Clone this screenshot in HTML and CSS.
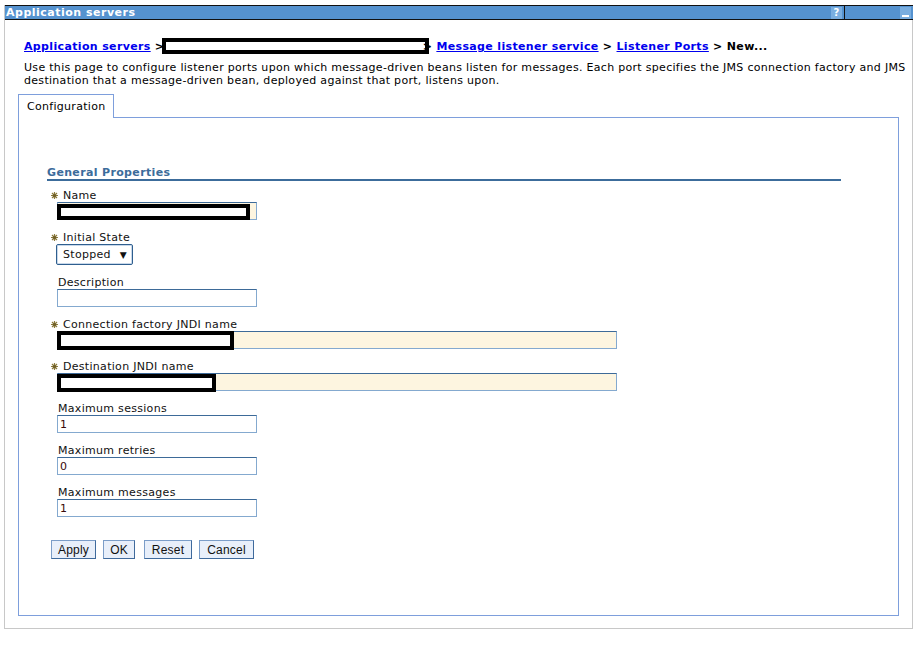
FILE: index.html
```html
<!DOCTYPE html>
<html>
<head>
<meta charset="utf-8">
<title>Application servers</title>
<link rel="stylesheet" href="styles.css">
</head>
<body>
<div class="portlet">
  <div class="titlebar">
    <span class="title">Application servers</span>
    <span class="tb-spacer"></span>
    <span class="tb-icon help">?</span>
    <span class="tb-sep"></span>
    <span class="tb-fill"></span>
    <span class="tb-icon min"><span class="dash"></span></span>
  </div>
  <div class="content">
    <div class="crumbs">
      <a href="#">Application servers</a> &gt; <span class="redact crumb-redact"></span>&gt; <a href="#">Message listener service</a> &gt; <a href="#">Listener Ports</a> &gt; New...
    </div>
    <p class="intro">Use this page to configure listener ports upon which message-driven beans listen for messages. Each port specifies the JMS connection factory and JMS destination that a message-driven bean, deployed against that port, listens upon.</p>
    <div class="tabs">
      <div class="tab">Configuration</div>
    </div>
    <div class="panel">
      <h3 class="section">General Properties</h3>
      <div class="fields">
        <div class="field">
          <label class="req"><span class="star"><svg width="7" height="7" viewBox="0 0 7 7"><path d="M3.5 0v7M0 3.5h7M1 1l5 5M6 1L1 6" stroke="#8b7a3c" stroke-width="1.2"/><circle cx="3.5" cy="3.5" r="1.6" fill="#6f5f28"/></svg></span>Name</label>
          <div class="inwrap">
            <input class="txt short required" type="text" value="">
            <span class="redact name-redact"></span>
          </div>
        </div>
        <div class="field">
          <label class="req"><span class="star"><svg width="7" height="7" viewBox="0 0 7 7"><path d="M3.5 0v7M0 3.5h7M1 1l5 5M6 1L1 6" stroke="#8b7a3c" stroke-width="1.2"/><circle cx="3.5" cy="3.5" r="1.6" fill="#6f5f28"/></svg></span>Initial State</label>
          <div class="selectbox"><span>Stopped</span><span class="arrow">▼</span></div>
        </div>
        <div class="field">
          <label>Description</label>
          <input class="txt short" type="text" value="">
        </div>
        <div class="field">
          <label class="req"><span class="star"><svg width="7" height="7" viewBox="0 0 7 7"><path d="M3.5 0v7M0 3.5h7M1 1l5 5M6 1L1 6" stroke="#8b7a3c" stroke-width="1.2"/><circle cx="3.5" cy="3.5" r="1.6" fill="#6f5f28"/></svg></span>Connection factory JNDI name</label>
          <div class="inwrap">
            <input class="txt long required" type="text" value="">
            <span class="redact cf-redact"></span>
          </div>
        </div>
        <div class="field">
          <label class="req"><span class="star"><svg width="7" height="7" viewBox="0 0 7 7"><path d="M3.5 0v7M0 3.5h7M1 1l5 5M6 1L1 6" stroke="#8b7a3c" stroke-width="1.2"/><circle cx="3.5" cy="3.5" r="1.6" fill="#6f5f28"/></svg></span>Destination JNDI name</label>
          <div class="inwrap">
            <input class="txt long required" type="text" value="">
            <span class="redact dest-redact"></span>
          </div>
        </div>
        <div class="field">
          <label>Maximum sessions</label>
          <input class="txt short" type="text" value="1">
        </div>
        <div class="field">
          <label>Maximum retries</label>
          <input class="txt short" type="text" value="0">
        </div>
        <div class="field">
          <label>Maximum messages</label>
          <input class="txt short" type="text" value="1">
        </div>
      </div>
      <div class="buttons">
        <button class="btn btn-apply">Apply</button>
        <button class="btn btn-ok">OK</button>
        <button class="btn btn-reset">Reset</button>
        <button class="btn btn-cancel">Cancel</button>
      </div>
    </div>
  </div>
</div>
</body>
</html>
```

FILE: styles.css
```css
* { box-sizing: border-box; }
html, body { margin: 0; padding: 0; background: #fff; }
body {
  font-family: "DejaVu Sans", Verdana, sans-serif;
  font-size: 11px;
  letter-spacing: 0.3px;
  color: #000;
}
.portlet {
  margin: 5px 0 0 4px;
  width: 909px;
  height: 624px;
  border-left: 1px solid #c8c8c8;
  border-right: 1px solid #c8c8c8;
  border-bottom: 1px solid #c8c8c8;
}
.titlebar {
  display: flex;
  align-items: stretch;
  height: 15px;
  margin-right: -1px;
  background: #5592cf;
  border-top: 1px solid #111;
  border-bottom: 1px solid #111;
}
.title {
  color: #fff;
  font-weight: bold;
  font-size: 11px;
  line-height: 13px;
  padding-left: 1px;
  letter-spacing: 0.5px;
}
.tb-spacer { flex: 1; }
.tb-icon {
  width: 11px;
  height: 12px;
  margin-top: 1px;
  background: #7aaee0;
  color: #fff;
  font-weight: bold;
  font-size: 10px;
  line-height: 12px;
  text-align: center;
  letter-spacing: 0;
}
.help { margin-right: 2px; }
.tb-sep { width: 1px; background: #111; }
.tb-fill { width: 55px; }
.min { margin-right: 2px; position: relative; }
.min .dash {
  position: absolute;
  left: 2px;
  bottom: 2px;
  width: 7px;
  height: 2px;
  background: #fff;
}
.content {
  padding: 0 0 0 13px;
}
.crumbs {
  margin: 18px 0 0 6px;
  font-weight: bold;
  line-height: 14px;
  white-space: nowrap;
  letter-spacing: 0.35px;
}
.crumbs a { color: #0000ee; text-decoration: underline; }
.redact {
  display: inline-block;
  border: 4px solid #000;
  background: #fff;
}
.crumb-redact {
  width: 267px;
  height: 16px;
  vertical-align: -4px;
  margin-left: -7px;
  margin-right: -6px;
}
.intro {
  margin: 7px 0 0 6px;
  width: 890px;
  line-height: 13px;
}
.tabs {
  display: flex;
  margin-top: 7px;
}
.tab {
  width: 96px;
  height: 24px;
  border: 1px solid #7e9fdc;
  border-bottom: none;
  background: #fff;
  padding: 5px 0 0 8px;
  line-height: 13px;
  position: relative;
  z-index: 1;
  margin-bottom: -1px;
}
.panel {
  width: 881px;
  height: 499px;
  border: 1px solid #7e9fdc;
  padding: 49px 0 0 28px;
}
.section {
  margin: 0;
  width: 794px;
  font-size: 11px;
  font-weight: bold;
  color: #3c6c9b;
  line-height: 12px;
  padding-bottom: 0;
  border-bottom: 2px solid #3c6c9b;
  letter-spacing: 0.35px;
}
.fields {
  margin: 8px 0 0 10px;
}
.field {
  margin-bottom: 11px;
}
.field label {
  display: flex;
  align-items: center;
  line-height: 13px;
  padding-left: 1px;
  color: #111;
}
.field label.req { margin-left: -7px; }
.star {
  display: inline-flex;
  width: 7px;
  margin-right: 5px;
}
.inwrap { position: relative; width: 560px; height: 18px; }
.txt {
  display: block;
  height: 18px;
  margin: 0;
  padding: 0 2px;
  font-family: "DejaVu Sans", Verdana, sans-serif;
  font-size: 11px;
  color: #3a0a0a;
  background: #fff;
  border: 1px solid #84a9cf;
  border-top-color: #3d6a98;
  border-radius: 0;
  outline: none;
}
.txt.short { width: 200px; }
.txt.long { width: 560px; }
.txt.required { background: #fdf5e0; }
.inwrap .redact { position: absolute; }
.name-redact { left: 0; top: 2px; width: 193px; height: 16px; }
.cf-redact { left: 0; top: 0; width: 177px; height: 19px; }
.dest-redact { left: 0; top: 1px; width: 159px; height: 18px; }
.selectbox {
  display: flex;
  align-items: center;
  justify-content: space-between;
  width: 77px;
  height: 21px;
  margin-left: -1px;
  padding: 0 5px 0 6px;
  border: 1px solid #2f5f8f;
  border-radius: 2px;
  box-shadow: inset 0 0 0 1px #c8d8ea;
  font-size: 11px;
  color: #111;
}
.selectbox .arrow { font-size: 9px; }
.buttons {
  display: flex;
  margin: 23px 0 0 4px;
}
.btn {
  height: 19px;
  padding: 0;
  text-align: center;
  font-family: "Liberation Sans", Arial, sans-serif;
  font-size: 12px;
  letter-spacing: 0.2px;
  color: #111;
  background: #e8effa;
  border: 1px solid #7b9dc8;
  border-right-color: #3f6a9c;
  border-bottom-color: #3f6a9c;
  border-radius: 0;
  line-height: 16px;
}
.btn-apply { width: 45px; margin-right: 7px; }
.btn-ok { width: 32px; margin-right: 9px; }
.btn-reset { width: 48px; margin-right: 7px; }
.btn-cancel { width: 55px; }
```
